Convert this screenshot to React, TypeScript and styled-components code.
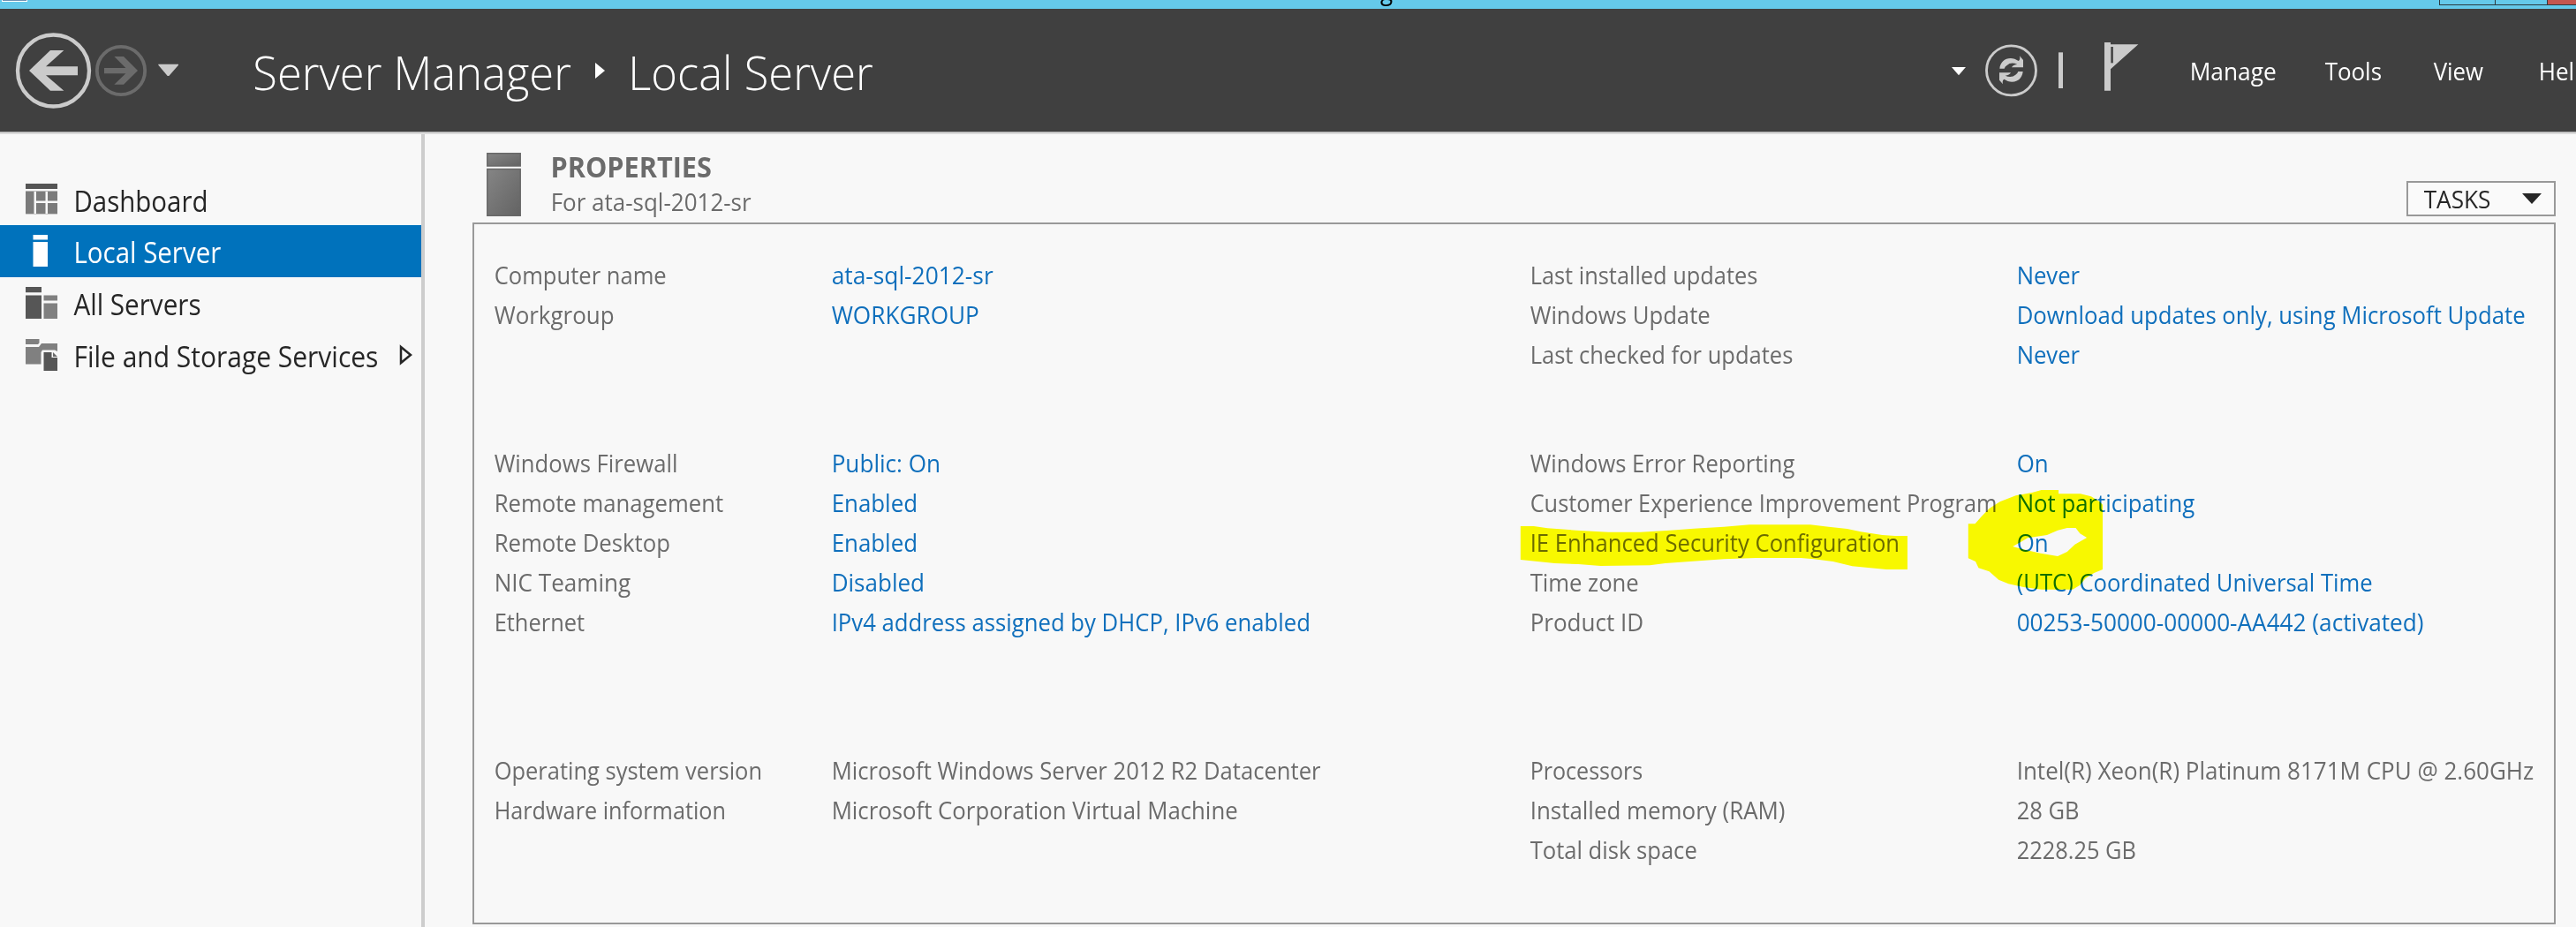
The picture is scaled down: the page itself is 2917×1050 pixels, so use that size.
import React, { useLayoutEffect, useRef, useState } from "react";
import styled, { createGlobalStyle } from "styled-components";

const FONT = '"Open Sans", "Noto Sans", "Liberation Sans", sans-serif';

const GlobalStyle = createGlobalStyle`
  * { box-sizing: border-box; }
  body { margin: 0; background: #f8f8f8; font-family: ${FONT}; overflow: hidden; }
  svg { display: block; flex: none; }
`;

/* ---- text condensed to a given ink width ---- */

const Line = styled.span<{ $size: number; $weight: number }>`
  display: block;
  flex: none;
  width: max-content;
  white-space: pre;
  font-size: ${(p) => p.$size}px;
  font-weight: ${(p) => p.$weight};
  transform-origin: 0 50%;
`;

interface FitProps {
  children: string;
  ink: number;
  size?: number;
  weight?: number;
}

function Fit({ children, ink, size = 27, weight = 400 }: FitProps) {
  const ref = useRef<HTMLSpanElement>(null);
  const [fit, setFit] = useState({ scale: 1, slack: 0 });
  useLayoutEffect(() => {
    const ctx = document.createElement("canvas").getContext("2d");
    if (!ctx || !ref.current) return;
    ctx.font = `${weight} ${size}px ${FONT}`;
    const m = ctx.measureText(children);
    const natural = m.actualBoundingBoxRight + m.actualBoundingBoxLeft;
    setFit({
      scale: ink / natural,
      slack: ink - ref.current.offsetWidth,
    });
  }, [children, ink, size, weight]);
  return (
    <Line
      ref={ref}
      $size={size}
      $weight={weight}
      style={{
        transform: `translateX(${-0.05 * size}px) scaleX(${fit.scale})`,
        marginRight: fit.slack,
      }}
    >
      {children}
    </Line>
  );
}

/* ---- window frame ---- */

const Window = styled.div`
  width: 2917px;
  height: 1050px;
  overflow: hidden;
  display: flex;
  flex-direction: column;
  background: #f8f8f8;
`;

const TitleBar = styled.div`
  flex: none;
  height: 10px;
  display: flex;
  align-items: flex-start;
  overflow: hidden;
  background: #65c9ea;
  color: #000;
`;

const AppIcon = styled.div`
  width: 29px;
  height: 2px;
  margin-left: 2px;
  border: 1px solid #fff;
  border-top: 0;
  background: #6f93b5;
`;

const Caption = styled.div`
  flex: 1;
  height: 10px;
  padding-left: 1380px;
  line-height: 40px;
  overflow: hidden;
  & > span { margin-top: -31px; }
`;

const Controls = styled.div`
  display: flex;
  height: 6px;
  border-left: 1px solid #2b3a40;
`;

const Control = styled.div<{ $w: number; $close?: boolean }>`
  width: ${(p) => p.$w}px;
  border-bottom: 1px solid #2b3a40;
  border-right: ${(p) => (p.$close ? "0" : "1px solid #2b3a40")};
  background: ${(p) => (p.$close ? "#c4574f" : "transparent")};
`;

const Header = styled.header`
  flex: none;
  height: 142px;
  display: flex;
  align-items: flex-start;
  background: #404040;
  border-bottom: 1px solid #dedede;
  box-shadow: inset 0 -1px #d6d6d6, inset 0 -2px #a9a9a9;
  color: #fff;
`;

const NavIcons = styled.div`
  flex: none;
  width: 289px;
  padding: 26px 0 0 17px;
`;

const Crumbs = styled.div`
  flex: none;
  display: flex;
  width: 1921px;
  line-height: 74px;
  padding-top: 35px;
`;

const CrumbArrow = styled.div`
  padding: 26px 29px 0 27px;
`;

const ToolIcons = styled.div`
  flex: none;
  width: 271px;
  padding-top: 37px;
`;

const Menu = styled.nav`
  flex: none;
  display: flex;
  padding-top: 43px;
  line-height: 56px;
`;

const MenuItem = styled.div<{ $w: number }>`
  flex: none;
  width: ${(p) => p.$w}px;
`;

/* ---- body ---- */

const Body = styled.div`
  flex: 1;
  min-height: 0;
  display: flex;
`;

const Sidebar = styled.aside`
  flex: none;
  width: 481px;
  padding-top: 44.3px;
  border-right: 4px solid #cdcdcd;
`;

const NavItem = styled.div<{ $active?: boolean }>`
  height: 58.7px;
  display: flex;
  align-items: center;
  line-height: 59px;
  color: ${(p) => (p.$active ? "#fff" : "#262626")};
  background: ${(p) => (p.$active ? "#0072bc" : "transparent")};
  & > span { margin-top: 3px; }
`;

const NavIcon = styled.div`
  flex: none;
  width: 55.5px;
  margin-left: 29px;
`;

const Expander = styled.div`
  margin-left: 26px;
  margin-top: 1px;
`;

const Main = styled.main`
  flex: none;
  width: 2413px;
  padding: 21px 0 0 54px;
`;

const PanelHead = styled.div`
  display: flex;
  height: 79px;
  padding-left: 16px;
  color: #6b6b6b;
`;

const Headings = styled.div`
  flex: 1;
  margin-left: 34.5px;
`;

const Heading = styled.div`
  height: 38px;
  margin-top: -6px;
  line-height: 44px;
`;

const SubHeading = styled.div`
  line-height: 44px;
  margin-top: 2px;
`;

const TasksButton = styled.button`
  width: 169px;
  height: 40px;
  margin-top: 32px;
  padding: 0 14px 0 19px;
  display: flex;
  align-items: center;
  justify-content: space-between;
  border: 2px solid #999;
  background: #fafafa;
  color: #262626;
  font-family: inherit;
  line-height: 36px;
  & > span { margin-top: 2px; }
`;

const Panel = styled.section`
  position: relative;
  height: 795px;
  border: 2px solid #999;
  padding: 35px 0 0 23.5px;
  display: grid;
  grid-template-columns: 1173.5px 1fr;
  align-content: start;
`;

const Group = styled.div<{ $labels: number; $gap: number }>`
  display: grid;
  grid-template-columns: ${(p) => p.$labels}px 1fr;
  grid-auto-rows: 45px;
  line-height: 45px;
  align-content: start;
  margin-bottom: ${(p) => p.$gap}px;
`;

const Label = styled.div`
  color: #6b6b6b;
`;

const Value = styled.div<{ $link: boolean }>`
  color: ${(p) => (p.$link ? "#0f6fbc" : "#6b6b6b")};
`;

const Marker = styled.svg`
  position: absolute;
  left: 1163px;
  top: 246px;
  width: 760px;
  height: 240px;
  mix-blend-mode: multiply;
  pointer-events: none;
`;

type Row = [string, number, string, number];

const left: Row[][] = [
  [
    ["Computer name", 193, "ata-sql-2012-sr", 182],
    ["Workgroup", 135.5, "WORKGROUP", 166],
  ],
  [
    ["Windows Firewall", 206, "Public: On", 120],
    ["Remote management", 257, "Enabled", 94],
    ["Remote Desktop", 197, "Enabled", 94],
    ["NIC Teaming", 153, "Disabled", 102],
    ["Ethernet", 100, "IPv4 address assigned by DHCP, IPv6 enabled", 539],
  ],
  [
    ["Operating system version", 301, "Microsoft Windows Server 2012 R2 Datacenter", 552],
    ["Hardware information", 259, "Microsoft Corporation Virtual Machine", 457],
  ],
];

const right: Row[][] = [
  [
    ["Last installed updates", 255, "Never", 69.5],
    ["Windows Update", 203, "Download updates only, using Microsoft Update", 573],
    ["Last checked for updates", 295, "Never", 69.5],
  ],
  [
    ["Windows Error Reporting", 300, "On", 33.5],
    ["Customer Experience Improvement Program", 526, "Not participating", 200],
    ["IE Enhanced Security Configuration", 415, "On", 33.5],
    ["Time zone", 122, "(UTC) Coordinated Universal Time", 401],
    ["Product ID", 125, "00253-50000-00000-AA442 (activated)", 459],
  ],
  [
    ["Processors", 125, "Intel(R) Xeon(R) Platinum 8171M CPU @ 2.60GHz", 583],
    ["Installed memory (RAM)", 286, "28 GB", 68.5],
    ["Total disk space", 188, "2228.25 GB", 133],
  ],
];

const gaps = [78, 123, 0];

const DashboardIcon = () => (
  <svg width="36" height="36" viewBox="0 0 36 36">
    <path fill="#555" d="M0 0h36v6H0z" />
    <path fill="#7b7b7b" d="M0 9h9.5v25H0zM12 9h10.500v10.500H12zM25 9h11v10.500H25zM12 22h10.500v12H12zM25 22h11v12H25z" />
    <path fill="#b8b8b8" d="M0 8h36v1H0zM0 34h36v.8H0z" />
  </svg>
);

const ServerIcon = () => (
  <svg width="36" height="36" viewBox="0 0 36 36">
    <path fill="#fff" d="M8.500 0H25v5.500H8.500zM8.500 8H25v28H8.500z" />
  </svg>
);

const ServersIcon = () => (
  <svg width="36" height="36" viewBox="0 0 36 36">
    <path fill="#565656" d="M0 0h18v6.300H0zM0 9.500h18V36H0z" />
    <path fill="#808080" d="M20.500 9.500H36v6H20.500zM20.500 18.500H36V36H20.500z" />
  </svg>
);

const StorageIcon = () => (
  <svg width="36" height="36" viewBox="0 0 36 36">
    <path fill="#808080" d="M0 0h15.500v4.500L14 6H0zM0 9h15l3-4h18v9l-3-1.500H19L17.500 15v13.500H0z" />
    <path fill="#565656" d="M20.500 15h9v6H36v15H20.500z" />
    <path fill="#6a6a6a" d="M31 15l5 5h-5z" />
  </svg>
);

function Properties({ groups, labels }: { groups: Row[][]; labels: number }) {
  return (
    <>
      {groups.map((rows, i) => (
        <Group key={i} $labels={labels} $gap={gaps[i] + (i === 0 ? (3 - rows.length) * 45 : 0)}>
          {rows.map(([label, lw, value, vw]) => (
            <React.Fragment key={label}>
              <Label><Fit ink={lw}>{label}</Fit></Label>
              <Value $link={i < 2}><Fit ink={vw}>{value}</Fit></Value>
            </React.Fragment>
          ))}
        </Group>
      ))}
    </>
  );
}

export default function App() {
  return (
    <Window>
      <GlobalStyle />
      <TitleBar>
        <AppIcon />
        <Caption><Fit ink={192} size={30}>Server Manager</Fit></Caption>
        <Controls>
          <Control $w={63} />
          <Control $w={59} />
          <Control $w={32} $close />
        </Controls>
      </TitleBar>

      <Header>
        <NavIcons>
          <svg width="190" height="88" viewBox="51 108 570 264">
            <circle cx="181.500" cy="240" r="121.500" fill="none" stroke="#cbcbcb" strokeWidth="13" />
            <path fill="#cbcbcb" d="M99 240L171 171H217L156 226H264V256H156L217 308H171Z" />
            <circle cx="411" cy="240" r="81.500" fill="none" stroke="#6b6b6b" strokeWidth="11.500" />
            <path fill="#6b6b6b" d="M468 240L420 287H388L427 250H354V231H427L388 192H420Z" />
            <path fill="#cbcbcb" d="M538 218H606V221L574 258H569L538 221Z" />
          </svg>
        </NavIcons>
        <Crumbs>
          <Fit ink={358} size={53} weight={300}>Server Manager</Fit>
          <CrumbArrow>
            <svg width="11" height="18" viewBox="0 0 11 18"><path fill="#fff" d="M0 0L11 9L0 18Z" /></svg>
          </CrumbArrow>
          <Fit ink={272} size={53} weight={300}>Local Server</Fit>
        </Crumbs>
        <ToolIcons>
          <svg width="214" height="66" viewBox="60 141 642 198">
            <path fill="#fff" d="M60 228H108L84 256Z" />
            <circle cx="262.500" cy="239.500" r="84" fill="none" stroke="#cbcbcb" strokeWidth="8.500" />
            <g fill="#cbcbcb">
              <path d="M223 233C225 207 248 192 274 200L287 207Q294 204 291 190L303 204V229H264Q268 220 283 219Q262 209 248 222Q241 226 239 233Z" />
              <path transform="rotate(180 262.500 238)" d="M223 233C225 207 248 192 274 200L287 207Q294 204 291 190L303 204V229H264Q268 220 283 219Q262 209 248 222Q241 226 239 233Z" />
              <path d="M423 178H438V300H423Z" />
              <path d="M579 144H600V151H694L600 235V308H579Z" />
            </g>
            <path fill="#404040" d="M601 159H608.500V214H601Z" />
          </svg>
        </ToolIcons>
        <Menu>
          <MenuItem $w={152.5}><Fit ink={95}>Manage</Fit></MenuItem>
          <MenuItem $w={123}><Fit ink={63.5}>Tools</Fit></MenuItem>
          <MenuItem $w={119}><Fit ink={56.5}>View</Fit></MenuItem>
          <MenuItem $w={41.5}><Fit ink={54}>Help</Fit></MenuItem>
        </Menu>
      </Header>

      <Body>
        <Sidebar>
          <NavItem>
            <NavIcon><DashboardIcon /></NavIcon>
            <Fit ink={147} size={32}>Dashboard</Fit>
          </NavItem>
          <NavItem $active>
            <NavIcon><ServerIcon /></NavIcon>
            <Fit ink={164} size={32}>Local Server</Fit>
          </NavItem>
          <NavItem>
            <NavIcon><ServersIcon /></NavIcon>
            <Fit ink={143} size={32}>All Servers</Fit>
          </NavItem>
          <NavItem>
            <NavIcon><StorageIcon /></NavIcon>
            <Fit ink={341} size={32}>File and Storage Services</Fit>
            <Expander>
              <svg width="16" height="24" viewBox="0 0 16 24">
                <path fill="none" stroke="#262626" strokeWidth="2.500" d="M2 3L13 12L2 21Z" />
              </svg>
            </Expander>
          </NavItem>
        </Sidebar>

        <Main>
          <PanelHead>
            <svg width="39" height="72" viewBox="0 0 39 72">
              <defs>
                <linearGradient id="metal" x1="0" y1="0" x2="1" y2="1">
                  <stop offset="0" stopColor="#858585" />
                  <stop offset="1" stopColor="#636363" />
                </linearGradient>
              </defs>
              <g fill="url(#metal)" stroke="#686868" strokeWidth="1.500">
                <path d="M.8 .8H38.200V15H.8Z" />
                <path d="M.8 18.500H38.200V71.200H.8Z" />
              </g>
            </svg>
            <Headings>
              <Heading><Fit ink={180} size={32} weight={700}>PROPERTIES</Fit></Heading>
              <SubHeading><Fit ink={225}>For ata-sql-2012-sr</Fit></SubHeading>
            </Headings>
            <TasksButton>
              <Fit ink={75}>TASKS</Fit>
              <svg width="22" height="12" viewBox="0 0 22 12"><path fill="#262626" d="M0 0H22L11 12Z" /></svg>
            </TasksButton>
          </PanelHead>
          <Panel>
            <div><Properties groups={left} labels={382.5} /></div>
            <div><Properties groups={right} labels={550.5} /></div>
            <Marker viewBox="0 0 1568 720" preserveAspectRatio="none">
              <path fill="#ffff00" d="M45 288H76L108 295L175 302L250 308H325L395 302L450 296L520 290L580 283H722L765 290L808 297L840 307L890 318L920 321H949V435H900L857 429L820 424L775 408L730 400L700 396H595L520 400L440 408L383 414L347 421L232 423L180 417L125 414L80 407L45 402Z" />
              <path fill="#ffff00" fillRule="evenodd" d="M1091 280H1107L1122 255L1140 228L1165 205L1202 184L1240 174L1262 165H1302V178H1353L1378 187L1398 205L1405 215V435L1385 447L1365 465L1352 488L1335 503H1262L1220 495L1185 484L1162 470L1140 442L1115 430L1108 408L1091 397ZM1195 357L1230 328L1275 318L1300 302L1322 294H1342L1352 313L1368 327L1340 350L1322 375L1300 390L1260 380L1215 365Z" />
            </Marker>
          </Panel>
        </Main>
      </Body>
    </Window>
  );
}
